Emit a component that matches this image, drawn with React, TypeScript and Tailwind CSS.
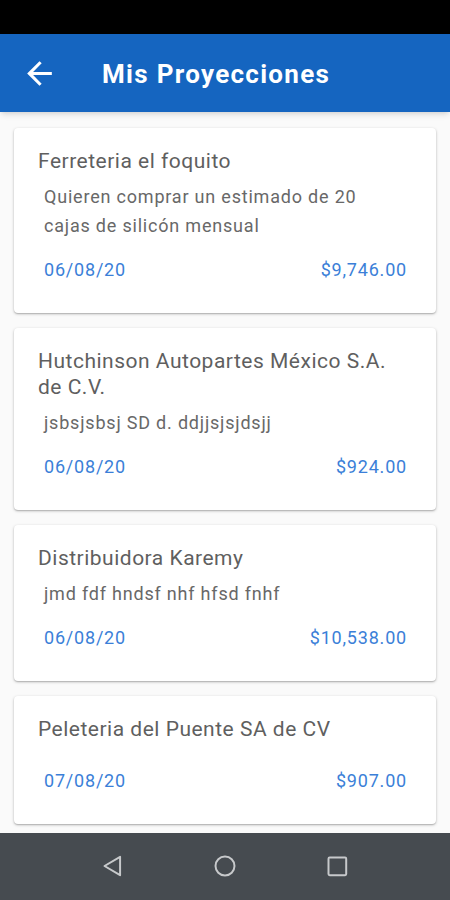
import { ReactNode } from 'react';

type Projection = {
  id: number;
  client: ReactNode;
  description?: ReactNode;
  date: string;
  amount: string;
};

const projections: Projection[] = [
  {
    id: 1,
    client: 'Ferreteria el foquito',
    description: 'Quieren comprar un estimado de 20 cajas de silicón mensual',
    date: '06/08/20',
    amount: '$9,746.00',
  },
  {
    id: 2,
    client: 'Hutchinson Autopartes México S.A. de C.V.',
    description: 'jsbsjsbsj SD d. ddjjsjsjdsjj',
    date: '06/08/20',
    amount: '$924.00',
  },
  {
    id: 3,
    client: 'Distribuidora Karemy',
    description: 'jmd fdf hndsf nhf hfsd fnhf',
    date: '06/08/20',
    amount: '$10,538.00',
  },
  {
    id: 4,
    client: 'Peleteria del Puente SA de CV',
    date: '07/08/20',
    amount: '$907.00',
  },
];

const App = () => {
  return (
    <div className="w-[450px] h-[900px] flex flex-col bg-[#fafafa] overflow-hidden font-['Roboto',sans-serif]">
      <div className="h-[34px] bg-black shrink-0" />

      <header className="h-[78px] shrink-0 bg-[#1565c0] flex items-center shadow-md z-10">
        <button className="ml-[21px] text-white">
          <svg width="37" height="37" viewBox="0 0 24 24" fill="currentColor">
            <path d="M20 11H7.83l5.59-5.59L12 4l-8 8 8 8 1.41-1.41L7.83 13H20v-2z" />
          </svg>
        </button>
        <h1 className="ml-[44px] text-white text-[26px] font-bold tracking-[1.3px] pt-[2px]">Mis Proyecciones</h1>
      </header>

      <main className="flex-1 flex flex-col gap-[15px] px-[14px] pt-[16px] overflow-hidden">
        {projections.map((p) => (
          <ProjectionCard key={p.id} projection={p} />
        ))}
      </main>

      <nav className="h-[67px] shrink-0 bg-[#464b50] flex items-center justify-center gap-[78px] pb-[2px]">
        <svg width="34" height="34" viewBox="0 0 24 24" fill="none" stroke="#c7c9cb" strokeWidth="1.4" strokeLinejoin="round">
          <path d="M17 5.5v13L6 12z" />
        </svg>
        <svg width="34" height="34" viewBox="0 0 24 24" fill="none" stroke="#c7c9cb" strokeWidth="1.4">
          <circle cx="12" cy="12" r="6.7" />
        </svg>
        <svg width="34" height="34" viewBox="0 0 24 24" fill="none" stroke="#c7c9cb" strokeWidth="1.4">
          <rect x="6" y="6" width="12.5" height="12.5" rx="0.8" />
        </svg>
      </nav>
    </div>
  );
};

const ProjectionCard = ({ projection }: { projection: Projection }) => {
  return (
    <div className="bg-white rounded-[4px] shadow-[0_1px_3px_rgba(0,0,0,0.25),0_1px_1px_rgba(0,0,0,0.12)] pl-[24px] pr-[29px] pt-[20px] pb-[31px] shrink-0">
      <h2 className="text-[21px] leading-[26px] tracking-[0.5px] text-[#5f5f5f] pr-[4px]">{projection.client}</h2>
      {projection.description && (
        <p className="mt-[8px] ml-[6px] pr-[20px] text-[18px] leading-[29px] tracking-[0.8px] text-[#686868]">
          {projection.description}
        </p>
      )}
      <div
        className={`flex justify-between items-center ml-[6px] text-[18px] leading-[24px] tracking-[0.8px] text-[#3b7fd8] ${
          projection.description ? 'mt-[18px]' : 'mt-[27px]'
        }`}
      >
        <span>{projection.date}</span>
        <span>{projection.amount}</span>
      </div>
    </div>
  );
};

export default App;
